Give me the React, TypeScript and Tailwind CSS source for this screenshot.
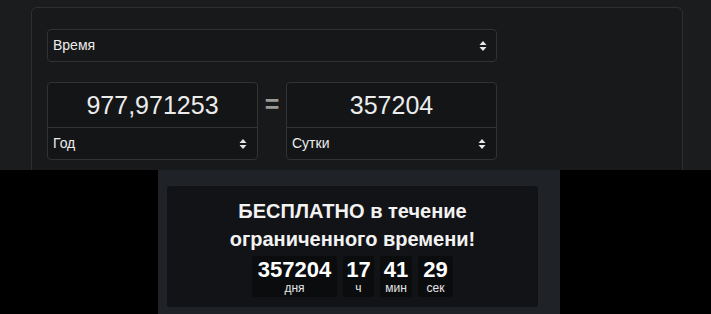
import React from 'react';

function Arrows() {
  return (
    <svg width="8" height="12" viewBox="0 0 8 12" className="shrink-0">
      <path d="M4 1 L7.5 5 L0.5 5 Z" fill="#e6e6e6" />
      <path d="M4 11 L7.5 7 L0.5 7 Z" fill="#e6e6e6" />
    </svg>
  );
}

function UnitBox({ value, unit }: { value: string; unit: string }) {
  return (
    <div className="w-[211px] rounded-[4px] border border-[#313235] bg-[#141517]">
      <div className="flex h-[44px] items-center justify-center text-[25px] leading-none text-[#ececec]">
        {value}
      </div>
      <div className="flex h-[32px] items-center justify-between border-t border-[#313235] pl-[5px] pr-[10px] text-[14px] text-[#ececec]">
        <span>{unit}</span>
        <Arrows />
      </div>
    </div>
  );
}

const countdown = [
  { value: '357204', label: 'дня', w: 'w-[85px]' },
  { value: '17', label: 'ч', w: 'w-[31px]' },
  { value: '41', label: 'мин', w: 'w-[32px]' },
  { value: '29', label: 'сек', w: 'w-[35px]' },
];

export default function App() {
  return (
    <div className="h-[314px] w-[711px] overflow-hidden bg-black font-['Liberation_Sans',Arial,sans-serif]">
      <div className="h-[170px] overflow-hidden bg-[#1b1c1e] pt-[7px]">
        <div className="ml-[31px] h-[220px] w-[652px] rounded-md border border-[#2e2f32] bg-[#18191b] px-[15px] pt-[21px]">
          <div className="flex h-[33px] w-[450px] items-center justify-between rounded-[4px] border border-[#313235] bg-[#161719] pl-[5px] pr-[9px] text-[14px] text-[#ececec]">
            <span>Время</span>
            <Arrows />
          </div>
          <div className="mt-[20px] flex">
            <UnitBox value="977,971253" unit="Год" />
            <div className="flex h-[44px] w-[28px] items-center justify-center text-[25px] font-bold leading-none text-[#9a9a9a]">
              =
            </div>
            <UnitBox value="357204" unit="Сутки" />
          </div>
        </div>
      </div>
      <div className="ml-[158px] h-[160px] w-[402px] bg-[#1f2227] pl-[9px] pr-[22px] pt-[16px]">
        <div className="h-[121px] rounded-[3px] bg-[#121317] pt-[11px] text-center text-[#f2f2f2]">
          <div className="text-[20px] font-bold leading-[28px]">
            <div>БЕСПЛАТНО в течение</div>
            <div>ограниченного времени!</div>
          </div>
          <div className="mt-[3px] flex justify-center gap-[6px]">
            {countdown.map((c) => (
              <div
                key={c.label}
                className={`${c.w} flex flex-col items-center rounded-[3px] bg-[#0b0c0e] pb-[2px] pt-[1px]`}
              >
                <span className="text-[22px] font-bold leading-[25px] text-white">{c.value}</span>
                <span className="text-[12px] leading-[13px] text-[#e6e6e6]">{c.label}</span>
              </div>
            ))}
          </div>
        </div>
      </div>
    </div>
  );
}
